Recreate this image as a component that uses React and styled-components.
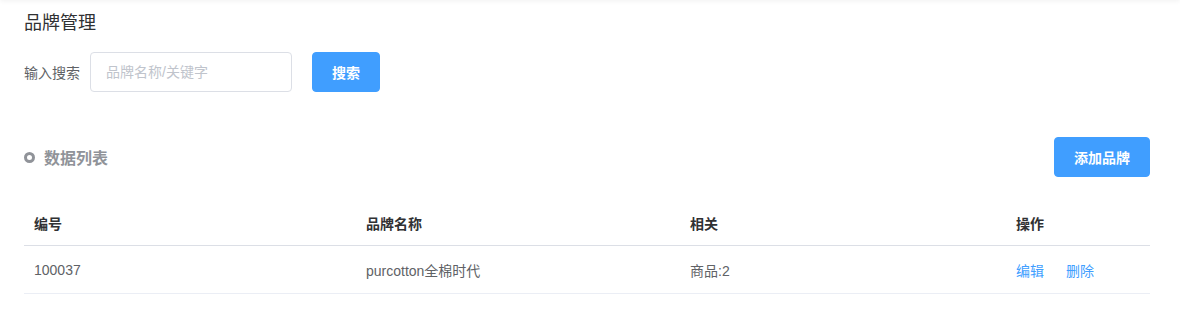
import React from "react";
import styled, { createGlobalStyle } from "styled-components";

const Global = createGlobalStyle`
  html, body { margin: 0; padding: 0; background: #fff; }
  body { font-family: "Liberation Sans", "Noto Sans CJK SC", sans-serif; }
  * { box-sizing: border-box; }
`;

const Page = styled.div`
  position: relative;
  padding: 11px 30px 0 24px;
  min-height: 316px;
  &::before {
    content: "";
    position: absolute;
    left: 0; right: 0; top: -6px; height: 6px;
    box-shadow: 0 1px 5px rgba(0, 0, 0, 0.06);
  }
`;

const Title = styled.div`
  font-size: 18px;
  color: #303133;
  line-height: 24px;
  height: 24px;
`;

const SearchRow = styled.div`
  display: flex;
  align-items: center;
  margin-top: 17px;
`;

const Label = styled.span`
  font-size: 14px;
  color: #606266;
  margin-right: 10px;
`;

const Input = styled.input`
  width: 202px;
  height: 40px;
  border: 1px solid #dcdfe6;
  border-radius: 4px;
  padding: 0 15px;
  font-size: 14px;
  font-family: inherit;
  color: #606266;
  outline: none;
  &::placeholder { color: #c0c4cc; }
`;

const Button = styled.button`
  height: 40px;
  width: ${(p) => p.$w}px;
  margin-left: ${(p) => p.$ml || 0}px;
  background: #409eff;
  border: 1px solid #409eff;
  border-radius: 4px;
  color: #fff;
  font-size: 14px;
  font-weight: 600;
  font-family: inherit;
  padding: 0;
  cursor: pointer;
`;

const SectionHead = styled.div`
  display: flex;
  align-items: center;
  justify-content: space-between;
  margin-top: 45px;
`;

const SectionTitle = styled.div`
  display: flex;
  align-items: center;
  font-size: 16px;
  font-weight: bold;
  color: #909399;
`;

const Ring = styled.span`
  width: 11px;
  height: 11px;
  border-radius: 50%;
  border: 3px solid #909399;
  margin-right: 9px;
  margin-top: 1px;
`;

const Table = styled.div`
  margin-top: 24px;
`;

const Row = styled.div`
  display: grid;
  grid-template-columns: 332px 324px 326px 1fr;
  height: ${(p) => (p.$head ? 45 : 48)}px;
  align-items: center;
  border-bottom: 1px solid ${(p) => (p.$head ? "#dcdfe6" : "#ebeef5")};
`;

const Cell = styled.div`
  padding-left: 10px;
  font-size: 14px;
  color: ${(p) => (p.$head ? "#303133" : "#606266")};
  font-weight: ${(p) => (p.$head ? "bold" : "normal")};
  display: flex;
  gap: 22px;
`;

const Link = styled.span`
  color: #409eff;
  cursor: pointer;
`;

export default function App() {
  return (
    <>
      <Global />
      <Page>
        <Title>品牌管理</Title>
        <SearchRow>
          <Label>输入搜索</Label>
          <Input placeholder="品牌名称/关键字" />
          <Button $w={68} $ml={20}>搜索</Button>
        </SearchRow>
        <SectionHead>
          <SectionTitle>
            <Ring />
            数据列表
          </SectionTitle>
          <Button $w={96}>添加品牌</Button>
        </SectionHead>
        <Table>
          <Row $head>
            <Cell $head>编号</Cell>
            <Cell $head>品牌名称</Cell>
            <Cell $head>相关</Cell>
            <Cell $head>操作</Cell>
          </Row>
          <Row>
            <Cell>100037</Cell>
            <Cell>purcotton全棉时代</Cell>
            <Cell>商品:2</Cell>
            <Cell>
              <Link>编辑</Link>
              <Link>删除</Link>
            </Cell>
          </Row>
        </Table>
      </Page>
    </>
  );
}
